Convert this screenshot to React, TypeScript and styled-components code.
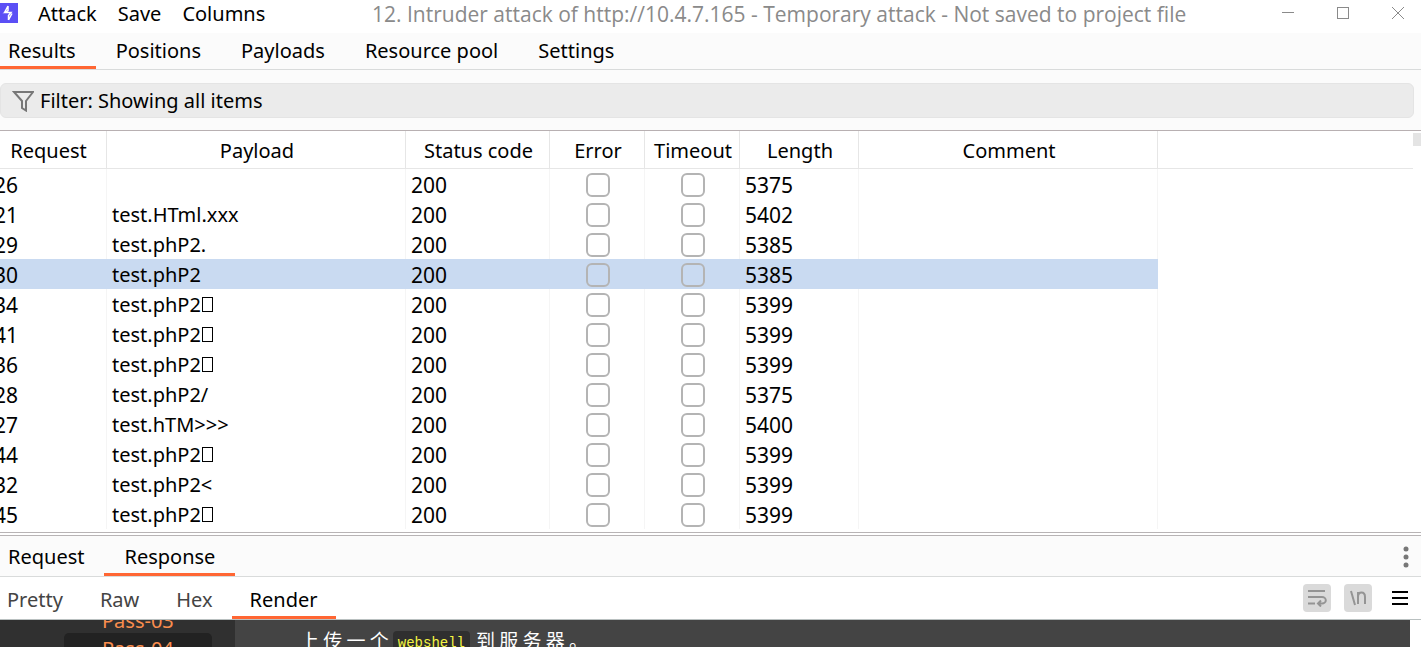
import React from 'react';
import styled, { createGlobalStyle, css } from 'styled-components';

const GlobalStyle = createGlobalStyle`
  *, *::before, *::after { box-sizing: border-box; }
  body {
    margin: 0;
    background: #fff;
    color: #000;
    font: 20px/30px "Noto Sans", "Noto Sans CJK SC", sans-serif;
    overflow: hidden;
  }
  button { font: inherit; color: inherit; background: none; border: 0; padding: 0; margin: 0; }
`;

const Window = styled.div`
  display: flex;
  flex-direction: column;
  height: 100vh;
  overflow: hidden;
`;

const TitleBar = styled.header`
  display: flex;
  align-items: flex-start;
  height: 33px;
  flex: none;
  line-height: 28px;
`;

const Logo = styled.svg`
  width: 18px;
  height: 20px;
  margin-top: 3px;
  flex: none;
`;

const Menu = styled.nav`
  display: flex;
  gap: 21px;
  margin-left: 20px;
  width: 334px;
  flex: none;
`;

const Title = styled.h1`
  flex: 1;
  margin: 0;
  font-family: "Open Sans", sans-serif;
  font-size: 21px;
  font-weight: 400;
  color: #8a8a8a;
  white-space: nowrap;
`;

const Controls = styled.div`
  display: flex;
  gap: 31px;
  padding-right: 11px;
`;

const ControlButton = styled.button`
  width: 24px;
  height: 26px;
  display: grid;
  place-items: center;
  color: #8a8a8a;
`;

const TabList = styled.div`
  display: flex;
  margin-left: -12px;
  flex: 1;
`;

const Tab = styled.button<{ $active?: boolean; $muted?: boolean }>`
  padding: 3px 20px 0;
  border-bottom: 3px solid ${p => (p.$active ? '#ff6633' : 'transparent')};
  color: ${p => (p.$muted ? '#444' : '#000')};
  white-space: nowrap;
`;

const TabBar = styled.div<{ $size: 'main' | 'message' | 'view' }>`
  display: flex;
  align-items: stretch;
  flex: none;
  padding-right: 10px;
  border-bottom: 1px solid #d9dbdb;
  background: #fbfbfb;
  height: 37px;
  ${p => p.$size === 'message' && css`
    height: 41px;
    ${Tab} { padding-top: 5px; }
  `}
  ${p => p.$size === 'view' && css`
    height: 43px;
    background: #fff;
    border-bottom-color: #b9c0c0;
    ${TabList} { margin-left: -11px; }
    ${Tab} { padding: 6px 19px 0 18px; }
  `}
`;

const FilterPanel = styled.section`
  flex: none;
  background: #fbfbfb;
  padding: 13px 7px 12px 0;
`;

const FilterButton = styled.button`
  display: flex;
  align-items: center;
  gap: 6px;
  width: 100%;
  height: 35px;
  padding-left: 11px;
  background: #ebebeb;
  border: 1px solid #e4e4e4;
  border-radius: 6px;
  text-align: left;
`;

const ResultsPane = styled.section`
  display: flex;
  flex: none;
  border-top: 1px solid #b8b0b2;
  border-bottom: 1px solid #b8b4b5;
  padding-bottom: 3px;
`;

const TableArea = styled.div`
  flex: 1;
  min-width: 0;
  overflow: hidden;
`;

const Results = styled.table`
  width: calc(100% + 11px);
  margin-left: -11px;
  border-collapse: separate;
  border-spacing: 0;
  table-layout: fixed;
`;

const HeadCell = styled.th`
  height: 38px;
  padding: 2px 0 0 2px;
  font-weight: 400;
  text-align: center;
  border-right: 1px solid #e6e6e6;
  border-bottom: 1px solid #e6e6e6;
  &:last-child { border-right: 0; }
`;

const Row = styled.tr<{ $selected: boolean }>`
  td:not(:last-child) { background: ${p => (p.$selected ? '#c9daf1' : '#fff')}; }
  td { border-right-color: ${p => (p.$selected ? '#c9daf1' : '#f5f5f5')}; }
`;

const Cell = styled.td<{ $numeric?: boolean }>`
  height: 30px;
  padding: 2px 0 0 5px;
  font-size: ${p => (p.$numeric ? '21px' : '20px')};
  line-height: 28px;
  border-right: 1px solid;
  white-space: nowrap;
  &:last-child { border-right: 0; }
`;

const CheckCell = styled(Cell)`
  padding: 0 0 0 2px;
  text-align: center;
`;

const CheckBox = styled.input`
  appearance: none;
  display: block;
  width: 24px;
  height: 24px;
  margin: 2px auto 0;
  border: 2px solid #b4b4b4;
  border-radius: 6px;
`;

const MissingGlyph = styled.span`
  display: inline-block;
  width: 11px;
  height: 15px;
  margin-left: 1px;
  border: 1px solid #000;
  vertical-align: baseline;
`;

const ScrollTrack = styled.div`
  width: 8px;
  padding-top: 2px;
  flex: none;
`;

const ScrollThumb = styled.div`
  height: 13px;
  background: #e4e4e4;
`;

const Splitter = styled.div`
  height: 3px;
  flex: none;
  border-bottom: 1px solid #b8b4b5;
`;

const MoreButton = styled.button`
  width: 10px;
  display: grid;
  place-items: center;
  padding-top: 2px;
`;

const Tools = styled.div`
  display: flex;
  align-items: center;
  gap: 13px;
  padding-right: 2px;
`;

const ToolButton = styled.button<{ $plain?: boolean }>`
  width: ${p => (p.$plain ? '18px' : '28px')};
  height: 28px;
  margin-left: ${p => (p.$plain ? '6px' : '0')};
  display: grid;
  place-items: center;
  background: ${p => (p.$plain ? 'transparent' : '#dadada')};
  border-radius: 4px;
  color: #949494;
`;

const Preview = styled.section`
  flex: 1;
  display: flex;
  min-height: 0;
  margin-right: 11px;
  overflow: hidden;
  background: #444;
`;

const PassList = styled.nav`
  width: 235px;
  flex: none;
  margin-top: -15px;
  padding-left: 64px;
  background: #303030;
`;

const PassLink = styled.a<{ $current?: boolean }>`
  display: block;
  width: 148px;
  padding-left: 38px;
  line-height: ${p => (p.$current ? '32px' : '32px')};
  height: ${p => (p.$current ? '32px' : '28px')};
  color: #f98d4e;
  text-decoration: none;
  border-radius: 5px;
  background: ${p => (p.$current ? '#222' : 'transparent')};
`;

const Task = styled.p`
  margin: 8px 0 0 65px;
  color: #fff;
  font-family: "Noto Sans CJK SC", sans-serif;
  font-size: 19px;
  line-height: 24px;
  white-space: nowrap;
`;

const Code = styled.code`
  display: inline-block;
  margin: 3px 6px 0 4px;
  padding: 0 5px;
  height: 24px;
  background: #2f2f2f;
  border-radius: 4px;
  color: #f5f543;
  font-family: "Liberation Mono", monospace;
  font-size: 14px;
  line-height: 24px;
  vertical-align: top;
`;

type Attack = {
  request: string;
  payload: string;
  length: string;
  missingGlyph?: boolean;
};

const attacks: Attack[] = [
  { request: '26', payload: '', length: '5375' },
  { request: '21', payload: 'test.HTml.xxx', length: '5402' },
  { request: '29', payload: 'test.phP2.', length: '5385' },
  { request: '30', payload: 'test.phP2', length: '5385' },
  { request: '34', payload: 'test.phP2', length: '5399', missingGlyph: true },
  { request: '41', payload: 'test.phP2', length: '5399', missingGlyph: true },
  { request: '36', payload: 'test.phP2', length: '5399', missingGlyph: true },
  { request: '28', payload: 'test.phP2/', length: '5375' },
  { request: '27', payload: 'test.hTM>>>', length: '5400' },
  { request: '44', payload: 'test.phP2', length: '5399', missingGlyph: true },
  { request: '32', payload: 'test.phP2<', length: '5399' },
  { request: '45', payload: 'test.phP2', length: '5399', missingGlyph: true },
];

const columns: [string, number | undefined][] = [
  ['Request', 118],
  ['Payload', 299],
  ['Status code', 144],
  ['Error', 95],
  ['Timeout', 95],
  ['Length', 119],
  ['Comment', 299],
  ['', undefined],
];

export default function App() {
  return (
    <Window>
      <GlobalStyle />
      <TitleBar>
        <Logo viewBox="0 0 18 20" aria-hidden="true">
          <rect width="18" height="20" fill="#5b4ff5" />
          <path d="M8 3v4.500L5 9.500h6L8.500 12.500V17M8 3 4.500 9.500M8.500 17l3.500-6.500" fill="none" stroke="#fff" strokeWidth="1.500" />
        </Logo>
        <Menu>
          <button>Attack</button>
          <button>Save</button>
          <button>Columns</button>
        </Menu>
        <Title>12. Intruder attack of http://10.4.7.165 - Temporary attack - Not saved to project file</Title>
        <Controls>
          <ControlButton aria-label="Minimize">
            <svg width="12" height="12"><path d="M0 5.500h12" stroke="currentColor" /></svg>
          </ControlButton>
          <ControlButton aria-label="Maximize">
            <svg width="12" height="12"><rect x=".5" y=".5" width="11" height="11" fill="none" stroke="currentColor" /></svg>
          </ControlButton>
          <ControlButton aria-label="Close">
            <svg width="12" height="12"><path d="M0 0l12 12M12 0L0 12" stroke="currentColor" /></svg>
          </ControlButton>
        </Controls>
      </TitleBar>

      <TabBar $size="main">
        <TabList>
          <Tab $active>Results</Tab>
          <Tab>Positions</Tab>
          <Tab>Payloads</Tab>
          <Tab>Resource pool</Tab>
          <Tab>Settings</Tab>
        </TabList>
      </TabBar>

      <FilterPanel>
        <FilterButton>
          <svg width="22" height="22" viewBox="0 0 22 22" fill="none" stroke="#777" strokeWidth="2" aria-hidden="true">
            <path d="M2 2h19l-7 9v9.500L10 18v-7z" />
          </svg>
          Filter: Showing all items
        </FilterButton>
      </FilterPanel>

      <ResultsPane>
        <TableArea>
          <Results>
            <colgroup>
              {columns.map(([name, width]) => <col key={name} width={width} />)}
            </colgroup>
            <thead>
              <tr>{columns.map(([name]) => <HeadCell key={name}>{name}</HeadCell>)}</tr>
            </thead>
            <tbody>
              {attacks.map(({ request, payload, length, missingGlyph }) => (
                <Row key={request} $selected={request === '30'}>
                  <Cell $numeric>{request}</Cell>
                  <Cell>{payload}{missingGlyph && <MissingGlyph />}</Cell>
                  <Cell $numeric>200</Cell>
                  <CheckCell><CheckBox type="checkbox" aria-label={`Error ${request}`} /></CheckCell>
                  <CheckCell><CheckBox type="checkbox" aria-label={`Timeout ${request}`} /></CheckCell>
                  <Cell $numeric>{length}</Cell>
                  <Cell />
                  <Cell />
                </Row>
              ))}
            </tbody>
          </Results>
        </TableArea>
        <ScrollTrack><ScrollThumb /></ScrollTrack>
      </ResultsPane>
      <Splitter />

      <TabBar $size="message">
        <TabList>
          <Tab>Request</Tab>
          <Tab $active>Response</Tab>
        </TabList>
        <MoreButton aria-label="More options">
          <svg width="6" height="24" fill="#777"><circle cx="3" cy="4" r="2.500" /><circle cx="3" cy="12" r="2.500" /><circle cx="3" cy="20" r="2.500" /></svg>
        </MoreButton>
      </TabBar>

      <TabBar $size="view">
        <TabList>
          <Tab $muted>Pretty</Tab>
          <Tab $muted>Raw</Tab>
          <Tab $muted>Hex</Tab>
          <Tab $active>Render</Tab>
        </TabList>
        <Tools>
          <ToolButton aria-label="Word wrap">
            <svg width="20" height="18" fill="none" stroke="currentColor" strokeWidth="2">
              <path d="M1 2h17M1 8h14a3.500 3 0 0 1 0 6.500h-3M1 14.500h7M14 11.500l-3 3 3 3" />
            </svg>
          </ToolButton>
          <ToolButton aria-label="Show line endings">
            <svg width="18" height="18" fill="none" stroke="currentColor" strokeWidth="2">
              <path d="M2 2l4 14M9 15V3M9 8c0-6 7-6 7 0v7" />
            </svg>
          </ToolButton>
          <ToolButton $plain aria-label="Menu">
            <svg width="16" height="16" stroke="#000" strokeWidth="2"><path d="M0 2h16M0 8h16M0 14h16" /></svg>
          </ToolButton>
        </Tools>
      </TabBar>

      <Preview>
        <PassList>
          <PassLink href="#pass-03">Pass-03</PassLink>
          <PassLink href="#pass-04" $current>Pass-04</PassLink>
        </PassList>
        <Task>上 传 一 个<Code>webshell</Code>到 服 务 器 。</Task>
      </Preview>
    </Window>
  );
}
